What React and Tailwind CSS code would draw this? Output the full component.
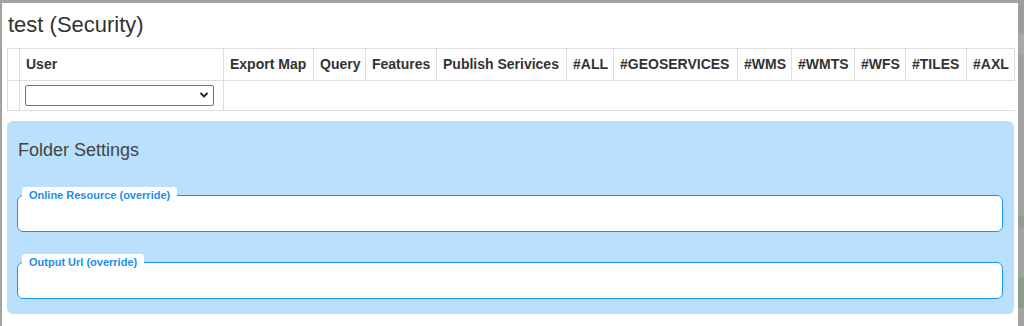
import { useState } from "react";

const columns = [
  { label: "", w: "w-[12px]" },
  { label: "User", w: "w-[204px]" },
  { label: "Export Map", w: "w-[90px]" },
  { label: "Query", w: "w-[52px]" },
  { label: "Features", w: "w-[71px]" },
  { label: "Publish Serivices", w: "w-[130px]" },
  { label: "#ALL", w: "w-[47px]" },
  { label: "#GEOSERVICES", w: "w-[124px]" },
  { label: "#WMS", w: "w-[54px]" },
  { label: "#WMTS", w: "w-[63px]" },
  { label: "#WFS", w: "w-[51px]" },
  { label: "#TILES", w: "w-[61px]" },
  { label: "#AXL", w: "w-[48px]" },
];

const FieldBox = ({ label }) => (
  <fieldset className="border border-[#1a90f5] rounded-[6px] bg-white h-[45px] px-[4px] min-w-0">
    <legend className="bg-white rounded-[3px] px-[7px] text-[11px] font-bold leading-[16px] text-[#1b8ef0]">
      {label}
    </legend>
  </fieldset>
);

const App = () => {
  const [user, setUser] = useState("");

  return (
    <div
      className="flex h-[326px] w-[1024px] overflow-hidden bg-[#a3a3a3]"
      style={{ fontFamily: '"Liberation Sans", Arial, sans-serif' }}>
      <div className="w-[2px] shrink-0" />
      <div className="flex flex-col w-[1016px] shrink-0">
        <div className="h-[3px]" />
        <div className="flex-1 bg-white px-[5px]">
          <h1 className="text-[22px] leading-[26px] text-[#333] pt-[9px] pl-[1px]">
            test (Security)
          </h1>

          <table className="table-fixed border-collapse mt-[10px] w-[1007px] text-[14px] text-[#333]">
            <colgroup>
              {columns.map((c, i) => (
                <col key={i} className={c.w} />
              ))}
            </colgroup>
            <thead>
              <tr className="h-[32px]">
                {columns.map((c, i) => (
                  <th
                    key={i}
                    className="border border-[#dddddd] px-[6px] text-left font-bold whitespace-nowrap overflow-hidden">
                    {c.label}
                  </th>
                ))}
              </tr>
            </thead>
            <tbody>
              <tr className="h-[30px]">
                <td className="border border-[#dddddd]" />
                <td className="border border-[#dddddd] pl-[5px] pr-[8px]">
                  <div className="relative w-[189px] h-[21px]">
                    <select
                      value={user}
                      onChange={(e) => setUser(e.target.value)}
                      className="appearance-none w-full h-full border border-[#767676] rounded-[2px] bg-white text-[13px] px-[4px]">
                      <option value=""></option>
                    </select>
                    <svg
                      className="absolute right-[5px] top-[6px] pointer-events-none"
                      width="10"
                      height="8"
                      viewBox="0 0 10 8">
                      <path d="M1.5 2 L5 5.5 L8.5 2" fill="none" stroke="#222" strokeWidth="1.8" />
                    </svg>
                  </div>
                </td>
                <td colSpan={11} className="border-l border-b border-[#dddddd]" />
              </tr>
            </tbody>
          </table>

          <div className="mt-[10px] w-[1007px] h-[193px] bg-[#b9e0fc] rounded-[6px] px-[10px] pt-[18px]">
            <h2 className="text-[18px] leading-[22px] text-[#444] pl-[1px]">Folder Settings</h2>
            <div className="flex flex-col gap-[22px] mt-[26px] pr-[1px]">
              <FieldBox label="Online Resource (override)" />
              <FieldBox label="Output Url (override)" />
            </div>
          </div>
        </div>
      </div>
      <div className="flex flex-col flex-1">
        <div className="h-[34px] bg-[#9d9d9d]" />
        <div className="h-[20px] bg-[#a8a8a8]" />
        <div className="h-[30px] bg-[#a0a0a0]" />
        <div className="h-[40px] bg-[#a6a0a0]" />
        <div className="h-[92px] bg-[#a2a2a2]" />
        <div className="h-[12px] bg-[#8fa08c]" />
        <div className="h-[50px] bg-[#a2a2a2]" />
        <div className="h-[30px] bg-[#8a9e87]" />
        <div className="flex-1 bg-[#a3a3a3]" />
      </div>
    </div>
  );
};

export default App;
